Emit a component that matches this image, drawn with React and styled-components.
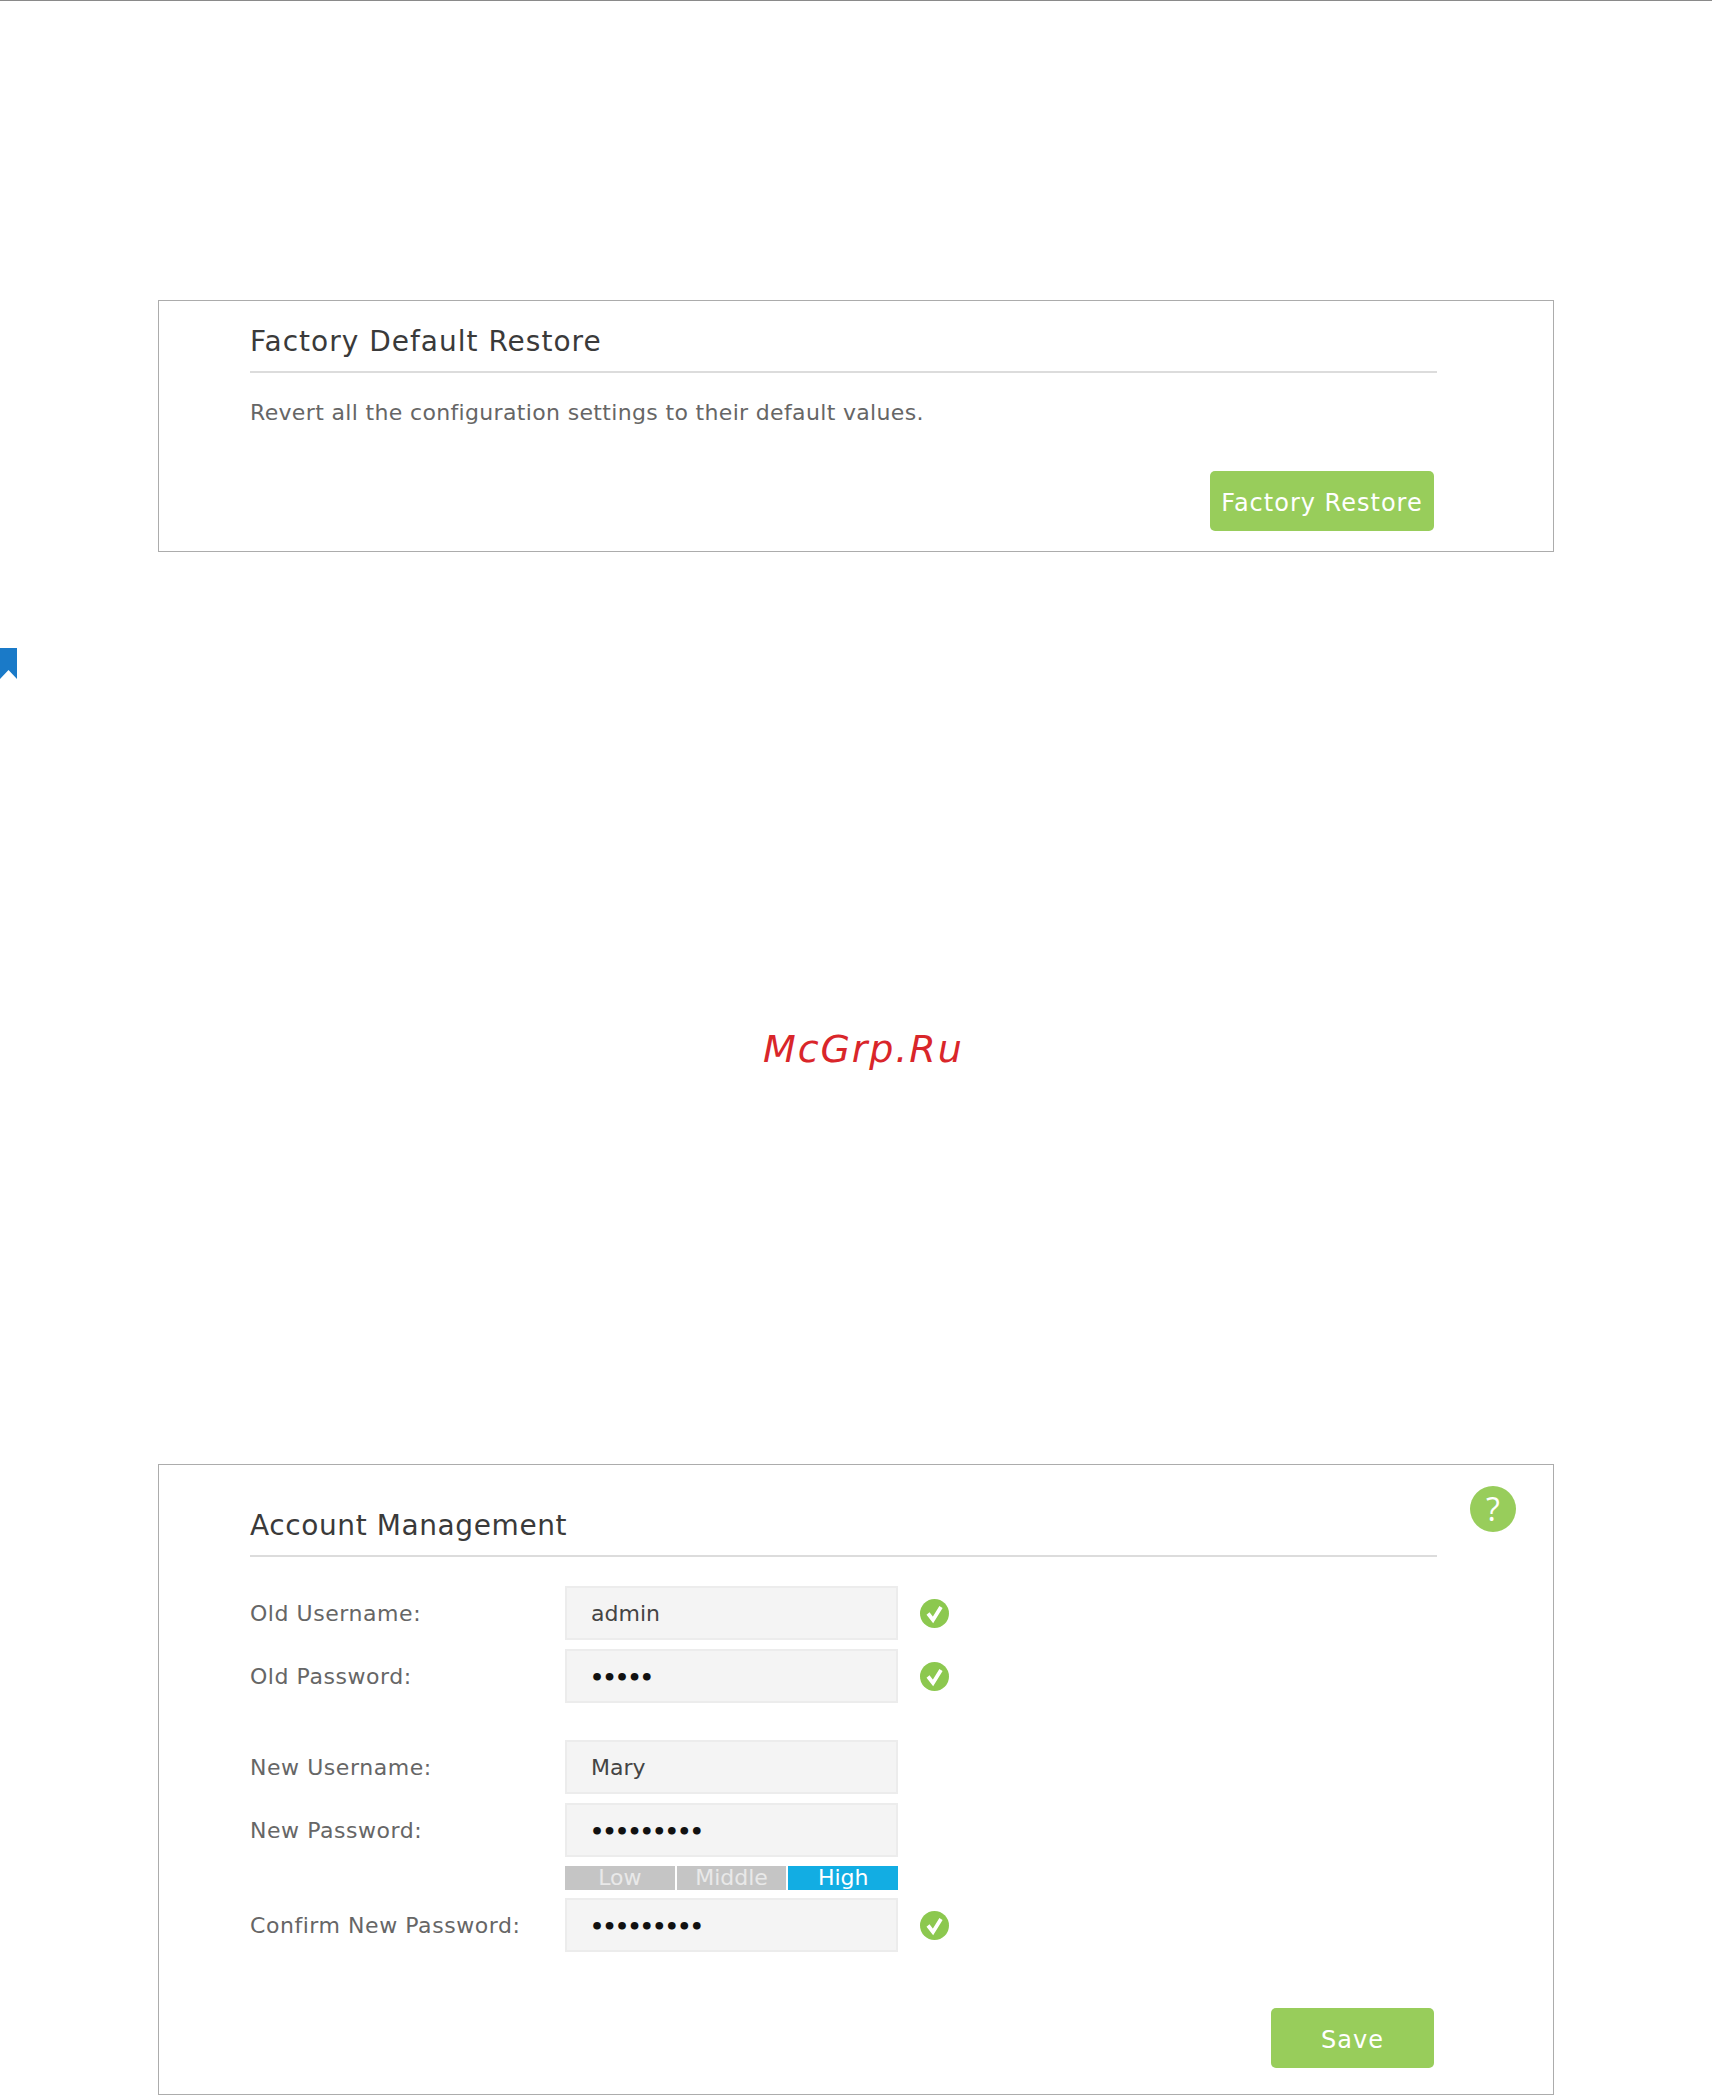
import styled, { createGlobalStyle } from "styled-components";

const GlobalStyle = createGlobalStyle`
  html, body {
    margin: 0;
    padding: 0;
    background: #fff;
  }
  body {
    font-family: "DejaVu Sans", Verdana, sans-serif;
  }
`;

const Page = styled.div`
  width: 1712px;
  height: 2095px;
  overflow: hidden;
  border-top: 1px solid #8a8a8a;
  box-sizing: border-box;
`;

const Card = styled.section`
  position: relative;
  box-sizing: border-box;
  width: 1396px;
  height: ${(p) => p.$height}px;
  margin: ${(p) => p.$top}px 0 0 158px;
  padding: ${(p) => p.$padTop}px 116px 0 91px;
  border: 1px solid #acacac;
`;

const Title = styled.h2`
  margin: 0;
  padding-bottom: ${(p) => p.$pad || 13}px;
  border-bottom: 2px solid #dcdcdc;
  font-size: 28px;
  line-height: 34px;
  letter-spacing: ${(p) => p.$spacing || 1}px;
  font-weight: 400;
  color: #3a3a3a;
`;

const Description = styled.p`
  margin: 25px 0 0;
  font-size: 22px;
  line-height: 30px;
  letter-spacing: 0.34px;
  color: #666;
`;

const ButtonRow = styled.div`
  display: flex;
  justify-content: flex-end;
  padding-right: 3px;
  margin-top: ${(p) => p.$top}px;
`;

const Button = styled.button`
  box-sizing: border-box;
  width: ${(p) => p.$width}px;
  height: 60px;
  padding: 3px 0 0;
  border: 0;
  border-radius: 5px;
  background: #98cd5b;
  color: #fff;
  font-family: inherit;
  font-size: 24px;
  letter-spacing: 1px;
`;

const Bookmark = styled.svg`
  display: block;
  margin-top: 96px;
`;

const Watermark = styled.div`
  margin: 346px 0 0 763px;
  font-size: 38px;
  line-height: 46px;
  letter-spacing: 1.9px;
  font-style: italic;
  color: #d9262a;
`;

const HelpBadge = styled.div`
  position: absolute;
  top: 21px;
  right: 37px;
  width: 46px;
  height: 46px;
  border-radius: 50%;
  background: #98cd5b;
  color: #fff;
  font-family: "Open Sans", sans-serif;
  font-size: 32px;
  line-height: 45px;
  text-align: center;
`;

const Form = styled.div`
  margin-top: 29px;
`;

const Row = styled.div`
  display: flex;
  align-items: center;
  height: 54px;
  margin-top: ${(p) => p.$top || 0}px;
`;

const Label = styled.label`
  width: 315px;
  flex: none;
  font-size: 22px;
  letter-spacing: 0.55px;
  color: #666;
`;

const Field = styled.input`
  box-sizing: border-box;
  width: 333px;
  height: 54px;
  flex: none;
  padding: ${(p) => (p.$secret ? "2px 0 0 23px" : "0 0 0 24px")};
  border: 2px solid #ececec;
  background: #f4f4f4;
  color: ${(p) => (p.$secret ? "#111" : "#444")};
  font-family: inherit;
  font-size: 22px;
  font-weight: ${(p) => (p.$secret ? 700 : 400)};
  letter-spacing: ${(p) => (p.$secret ? "-1.6px" : "normal")};
  outline: none;
`;

const Check = styled.svg`
  flex: none;
  margin-left: 22px;
`;

const Strength = styled.div`
  display: flex;
  gap: 2px;
  width: 333px;
  height: 24px;
  margin: 9px 0 8px 315px;
`;

const StrengthCell = styled.div`
  flex: 1;
  background: ${(p) => (p.$active ? "#12ade3" : "#c5c5c5")};
  color: ${(p) => (p.$active ? "#fff" : "#e9e9e9")};
  font-size: 22px;
  line-height: 24px;
  text-align: center;
`;

const CheckIcon = () => (
  <Check width="29" height="29" viewBox="0 0 29 29">
    <circle cx="14.5" cy="14.5" r="14.5" fill="#8cc84f" />
    <path d="M8 14.5l5 6.5 8-13" fill="none" stroke="#fff" strokeWidth="3.8" />
  </Check>
);

const rowsOld = [
  { label: "Old Username:", value: "admin" },
  { label: "Old Password:", value: "•••••", top: 9, secret: true },
];

function App() {
  return (
    <Page>
      <GlobalStyle />
      <Card $top={299} $height={252} $padTop={24}>
        <Title $pad={12}>Factory Default Restore</Title>
        <Description>Revert all the configuration settings to their default values.</Description>
        <ButtonRow $top={43}>
          <Button $width={224}>Factory Restore</Button>
        </ButtonRow>
      </Card>

      <Bookmark width="17" height="32" viewBox="0 0 17 32">
        <path d="M0 0H17V31L8.5 22L0 31Z" fill="#1a7ac8" />
      </Bookmark>
      <Watermark>McGrp.Ru</Watermark>

      <Card $top={392} $height={631} $padTop={44}>
        <HelpBadge>?</HelpBadge>
        <Title $pad={12} $spacing={0.6}>Account Management</Title>
        <Form>
          {rowsOld.map((r) => (
            <Row key={r.label} $top={r.top}>
              <Label>{r.label}</Label>
              <Field readOnly value={r.value} $secret={r.secret} />
              <CheckIcon />
            </Row>
          ))}
          <Row $top={37}>
            <Label>New Username:</Label>
            <Field readOnly value="Mary" />
          </Row>
          <Row $top={9}>
            <Label>New Password:</Label>
            <Field readOnly value="•••••••••" $secret />
          </Row>
          <Strength>
            <StrengthCell>Low</StrengthCell>
            <StrengthCell>Middle</StrengthCell>
            <StrengthCell $active>High</StrengthCell>
          </Strength>
          <Row>
            <Label>Confirm New Password:</Label>
            <Field readOnly value="•••••••••" $secret />
            <CheckIcon />
          </Row>
        </Form>
        <ButtonRow $top={56}>
          <Button $width={163}>Save</Button>
        </ButtonRow>
      </Card>
    </Page>
  );
}

export default App;
